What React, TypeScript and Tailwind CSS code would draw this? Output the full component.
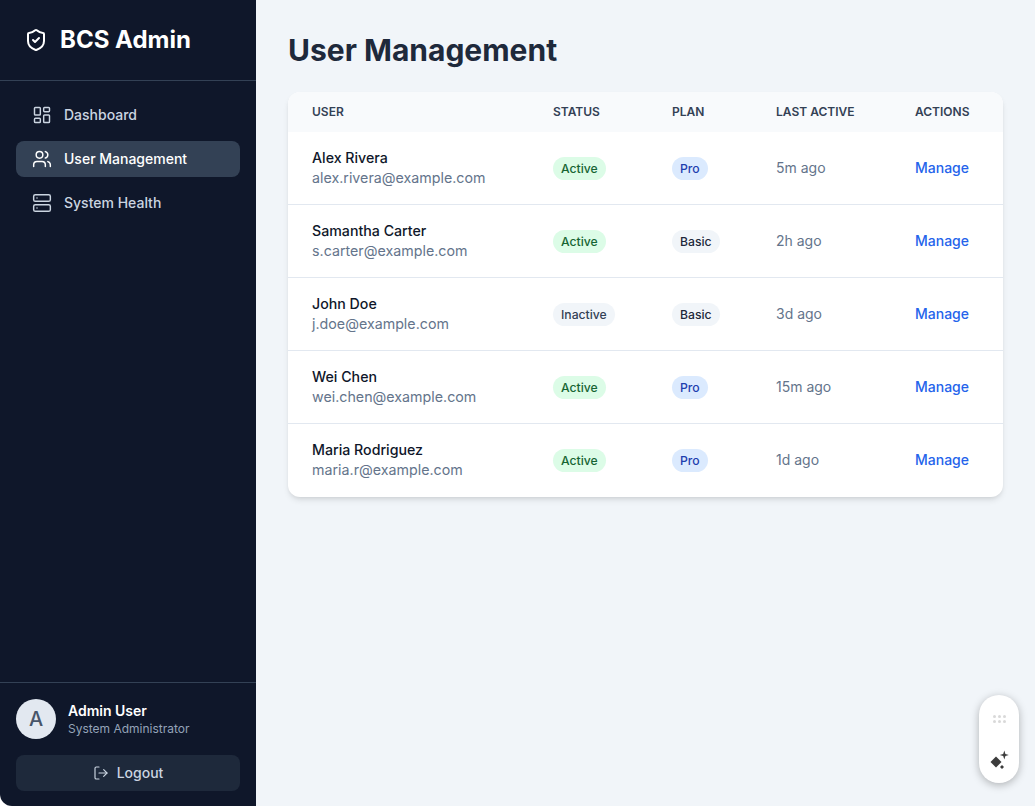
import { LayoutDashboard, LogOut, Server, ShieldCheck, Users } from "lucide-react";
import clsx from "clsx";

type Row = { name: string; email: string; active: boolean; plan: "Pro" | "Basic"; last: string };

const rows: Row[] = [
  { name: "Alex Rivera", email: "alex.rivera@example.com", active: true, plan: "Pro", last: "5m ago" },
  { name: "Samantha Carter", email: "s.carter@example.com", active: true, plan: "Basic", last: "2h ago" },
  { name: "John Doe", email: "j.doe@example.com", active: false, plan: "Basic", last: "3d ago" },
  { name: "Wei Chen", email: "wei.chen@example.com", active: true, plan: "Pro", last: "15m ago" },
  { name: "Maria Rodriguez", email: "maria.r@example.com", active: true, plan: "Pro", last: "1d ago" },
];

const nav = [
  { label: "Dashboard", icon: LayoutDashboard },
  { label: "User Management", icon: Users, active: true },
  { label: "System Health", icon: Server },
];

function Badge({ text, className }: { text: string; className: string }) {
  return (
    <span className={clsx("flex h-[23px] w-fit items-center rounded-full px-2 pt-[2px] text-[12.2px] font-medium", className)}>
      {text}
    </span>
  );
}

export default function App() {
  return (
    <div className="flex h-[806px] overflow-hidden bg-white font-['Inter',sans-serif]">
      {/* Sidebar */}
      <aside className="flex w-64 shrink-0 flex-col rounded-bl-xl bg-[#0f172a]">
        <div className="flex h-[81px] items-center gap-3 border-b border-[#334155] px-6">
          <ShieldCheck size={24} strokeWidth={2} className="text-white" />
          <span className="text-2xl font-bold text-white">BCS Admin</span>
        </div>
        <nav className="flex flex-1 flex-col gap-2 p-4">
          {nav.map((item) => (
            <a
              key={item.label}
              className={clsx(
                "flex h-9 items-center gap-3 rounded-lg px-4 text-sm font-medium",
                item.active ? "bg-[#334155] text-white" : "text-[#cbd5e1]"
              )}
            >
              <item.icon size={20} strokeWidth={1.75} />
              {item.label}
            </a>
          ))}
        </nav>
        <div className="border-t border-[#334155] px-4 pb-[15px] pt-4">
          <div className="flex items-center gap-3">
            <div className="flex h-10 w-10 items-center justify-center rounded-full bg-[#e2e8f0] text-xl font-medium text-[#475569]">
              A
            </div>
            <div>
              <div className="text-sm font-semibold leading-5 text-white">Admin User</div>
              <div className="text-xs leading-4 text-[#94a3b8]">System Administrator</div>
            </div>
          </div>
          <button className="mt-4 flex h-9 w-full items-center justify-center gap-2 rounded-lg bg-[#1e293b] text-sm font-medium text-[#cbd5e1]">
            <LogOut size={16} strokeWidth={1.75} />
            Logout
          </button>
        </div>
      </aside>

      {/* Main */}
      <main className="relative flex-1 bg-[#f1f5f9] p-8">
        <h1 className="mb-6 text-3xl font-bold leading-9 text-[#1e293b]">User Management</h1>
        <div className="overflow-hidden rounded-xl bg-white shadow-[0_4px_6px_-1px_rgba(0,0,0,0.1),0_2px_4px_-2px_rgba(0,0,0,0.1)]">
          <table className="w-full table-fixed border-separate border-spacing-0 text-left">
            <thead className="bg-[#f8fafc]">
              <tr className="h-10 text-xs font-semibold uppercase text-[#334155]">
                <th className="w-[241px] pl-6 font-semibold">User</th>
                <th className="w-[119px] pl-6 font-semibold">Status</th>
                <th className="w-[104px] pl-6 font-semibold">Plan</th>
                <th className="w-[139px] pl-6 font-semibold">Last Active</th>
                <th className="pl-6 font-semibold">Actions</th>
              </tr>
            </thead>
            <tbody>
              {rows.map((row, i) => {
                const cell = clsx(
                  "h-[73px] pl-6 align-middle",
                  i < rows.length - 1 ? "border-b border-[#e2e8f0]" : "pb-px"
                );
                return (
                  <tr key={row.email}>
                    <td className={cell}>
                      <div className="text-[14.2px] font-medium leading-5 text-[#0f172a]">{row.name}</div>
                      <div className="text-[14.25px] leading-5 text-[#64748b]">{row.email}</div>
                    </td>
                    <td className={cell}>
                      <Badge
                        text={row.active ? "Active" : "Inactive"}
                        className={row.active ? "bg-[#dcfce7] text-[#166534]" : "bg-[#f1f5f9] text-[#334155]"}
                      />
                    </td>
                    <td className={cell}>
                      <Badge
                        text={row.plan}
                        className={row.plan === "Pro" ? "bg-[#dbeafe] text-[#1e40af]" : "bg-[#f1f5f9] text-[#1e293b]"}
                      />
                    </td>
                    <td className={clsx(cell, "text-sm text-[#64748b]")}>{row.last}</td>
                    <td className={clsx(cell, "text-sm font-medium text-[#2563eb]")}>Manage</td>
                  </tr>
                );
              })}
            </tbody>
          </table>
        </div>

        {/* Floating widget */}
        <div className="absolute bottom-[23px] right-4 flex h-[88px] w-10 flex-col items-center justify-between rounded-full bg-white pb-[14px] pt-5 shadow-[0_2px_8px_rgba(0,0,0,0.28)]">
          <svg width="13" height="8" viewBox="0 0 13 8" fill="#d9d9d9">
            <circle cx="1.5" cy="1.5" r="1.5" />
            <circle cx="6.5" cy="1.5" r="1.5" />
            <circle cx="11.5" cy="1.5" r="1.5" />
            <circle cx="1.5" cy="6.5" r="1.5" />
            <circle cx="6.5" cy="6.5" r="1.5" />
            <circle cx="11.5" cy="6.5" r="1.5" />
          </svg>
          <svg width="20" height="22" viewBox="0 0 20 22" fill="#3c3c3c">
            <path d="M7 9.5 L12.5 15 L7 20.5 L1.5 15 Z" />
            <path d="M15.3 3.5 L16.4 6.9 L19.8 8 L16.4 9.1 L15.3 12.5 L14.2 9.1 L10.8 8 L14.2 6.9 Z" />
            <path d="M13 18 L15 20 L13 22 L11 20 Z" />
          </svg>
        </div>
      </main>
    </div>
  );
}
